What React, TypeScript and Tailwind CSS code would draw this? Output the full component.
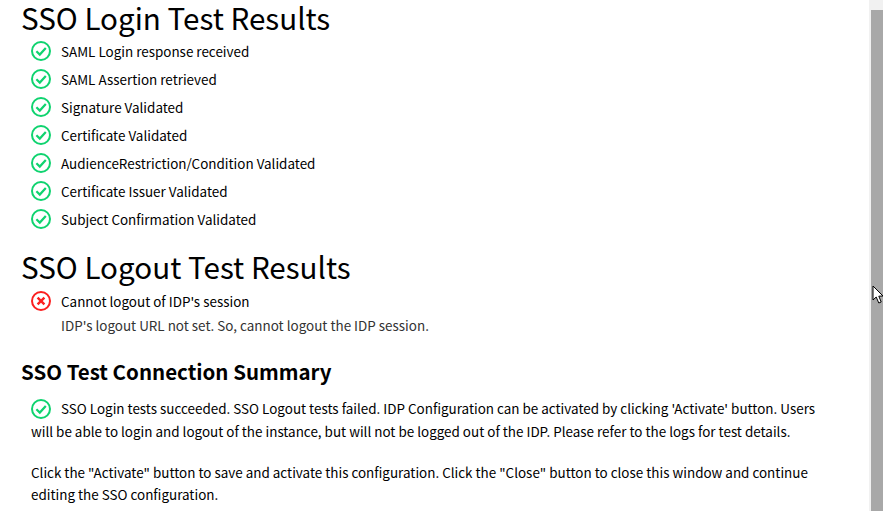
import React from "react"

const LOGIN_CHECKS = [
  "SAML Login response received",
  "SAML Assertion retrieved",
  "Signature Validated",
  "Certificate Validated",
  "AudienceRestriction/Condition Validated",
  "Certificate Issuer Validated",
  "Subject Confirmation Validated",
]

function OkIcon() {
  return (
    <svg width="20" height="20" viewBox="0 0 20 20" fill="none" className="shrink-0">
      <circle cx="10" cy="10" r="9" stroke="#0fd36f" strokeWidth="2" />
      <path d="M5.4 10.2 L8.8 13.6 L14.8 7" stroke="#0fd36f" strokeWidth="2.2" />
    </svg>
  )
}

function FailIcon() {
  return (
    <svg width="20" height="20" viewBox="0 0 20 20" fill="none" className="shrink-0">
      <circle cx="10" cy="10" r="9" stroke="#fb1f1f" strokeWidth="2" />
      <path d="M6.6 6.6 L13.4 13.4 M13.4 6.6 L6.6 13.4" stroke="#fb1f1f" strokeWidth="2.4" />
    </svg>
  )
}

function Row({ text }: { text: string }) {
  return (
    <div className="flex h-7 items-center gap-[10px]">
      <OkIcon />
      <span>{text}</span>
    </div>
  )
}

export default function App() {
  return (
    <div className="flex h-[511px] w-[883px] overflow-hidden bg-white font-['Noto_Sans_CJK_SC',sans-serif] text-[13.45px] text-black">
      <div className="min-w-0 flex-1 pl-[21px] pr-[50px]">
        <h1 className="text-[29.6px] leading-[36px]">SSO Login Test Results</h1>
        <div className="mt-[1px] pl-[10px]">
          {LOGIN_CHECKS.map((c) => (
            <Row key={c} text={c} />
          ))}
        </div>

        <h1 className="mt-[14px] text-[29.6px] leading-[40px]">SSO Logout Test Results</h1>
        <div className="mt-[2px] pl-[10px]">
          <div className="flex h-[24px] items-center gap-[10px]">
            <FailIcon />
            <span>Cannot logout of IDP's session</span>
          </div>
          <div className="pl-[30px] leading-[24px] text-[#333]">IDP's logout URL not set. So, cannot logout the IDP session.</div>
        </div>

        <h3 className="mt-[18px] text-[20.5px] font-semibold leading-[32px]">SSO Test Connection Summary</h3>
        <div className="mt-[10px] pl-[10px] leading-[23px]">
          <span className="mr-[10px] inline-block align-[-5px]">
            <OkIcon />
          </span>
          SSO Login tests succeeded. SSO Logout tests failed. IDP Configuration can be activated by clicking 'Activate' button. Users will be able to login and logout of the instance, but will not be logged out of the IDP. Please refer to the logs for test details.
        </div>
        <div className="mt-[18px] pl-[10px] leading-[22px]">
          Click the "Activate" button to save and activate this configuration. Click the "Close" button to close this window and continue editing the SSO configuration.
        </div>
      </div>

      <div className="relative w-[14px] shrink-0 bg-[#f1f1f1] pl-[2px] pt-[10px]">
        <div className="h-full bg-[#a8a8a8]" />
        <svg width="13" height="20" viewBox="0 0 13 20" className="absolute left-[3px] top-[285px]">
          <path d="M1 1 L1 15 L4.2 12 L6.8 18 L9.2 17 L6.8 11.2 L11 11 Z" fill="#fff" stroke="#000" strokeWidth="1" />
        </svg>
      </div>
    </div>
  )
}
